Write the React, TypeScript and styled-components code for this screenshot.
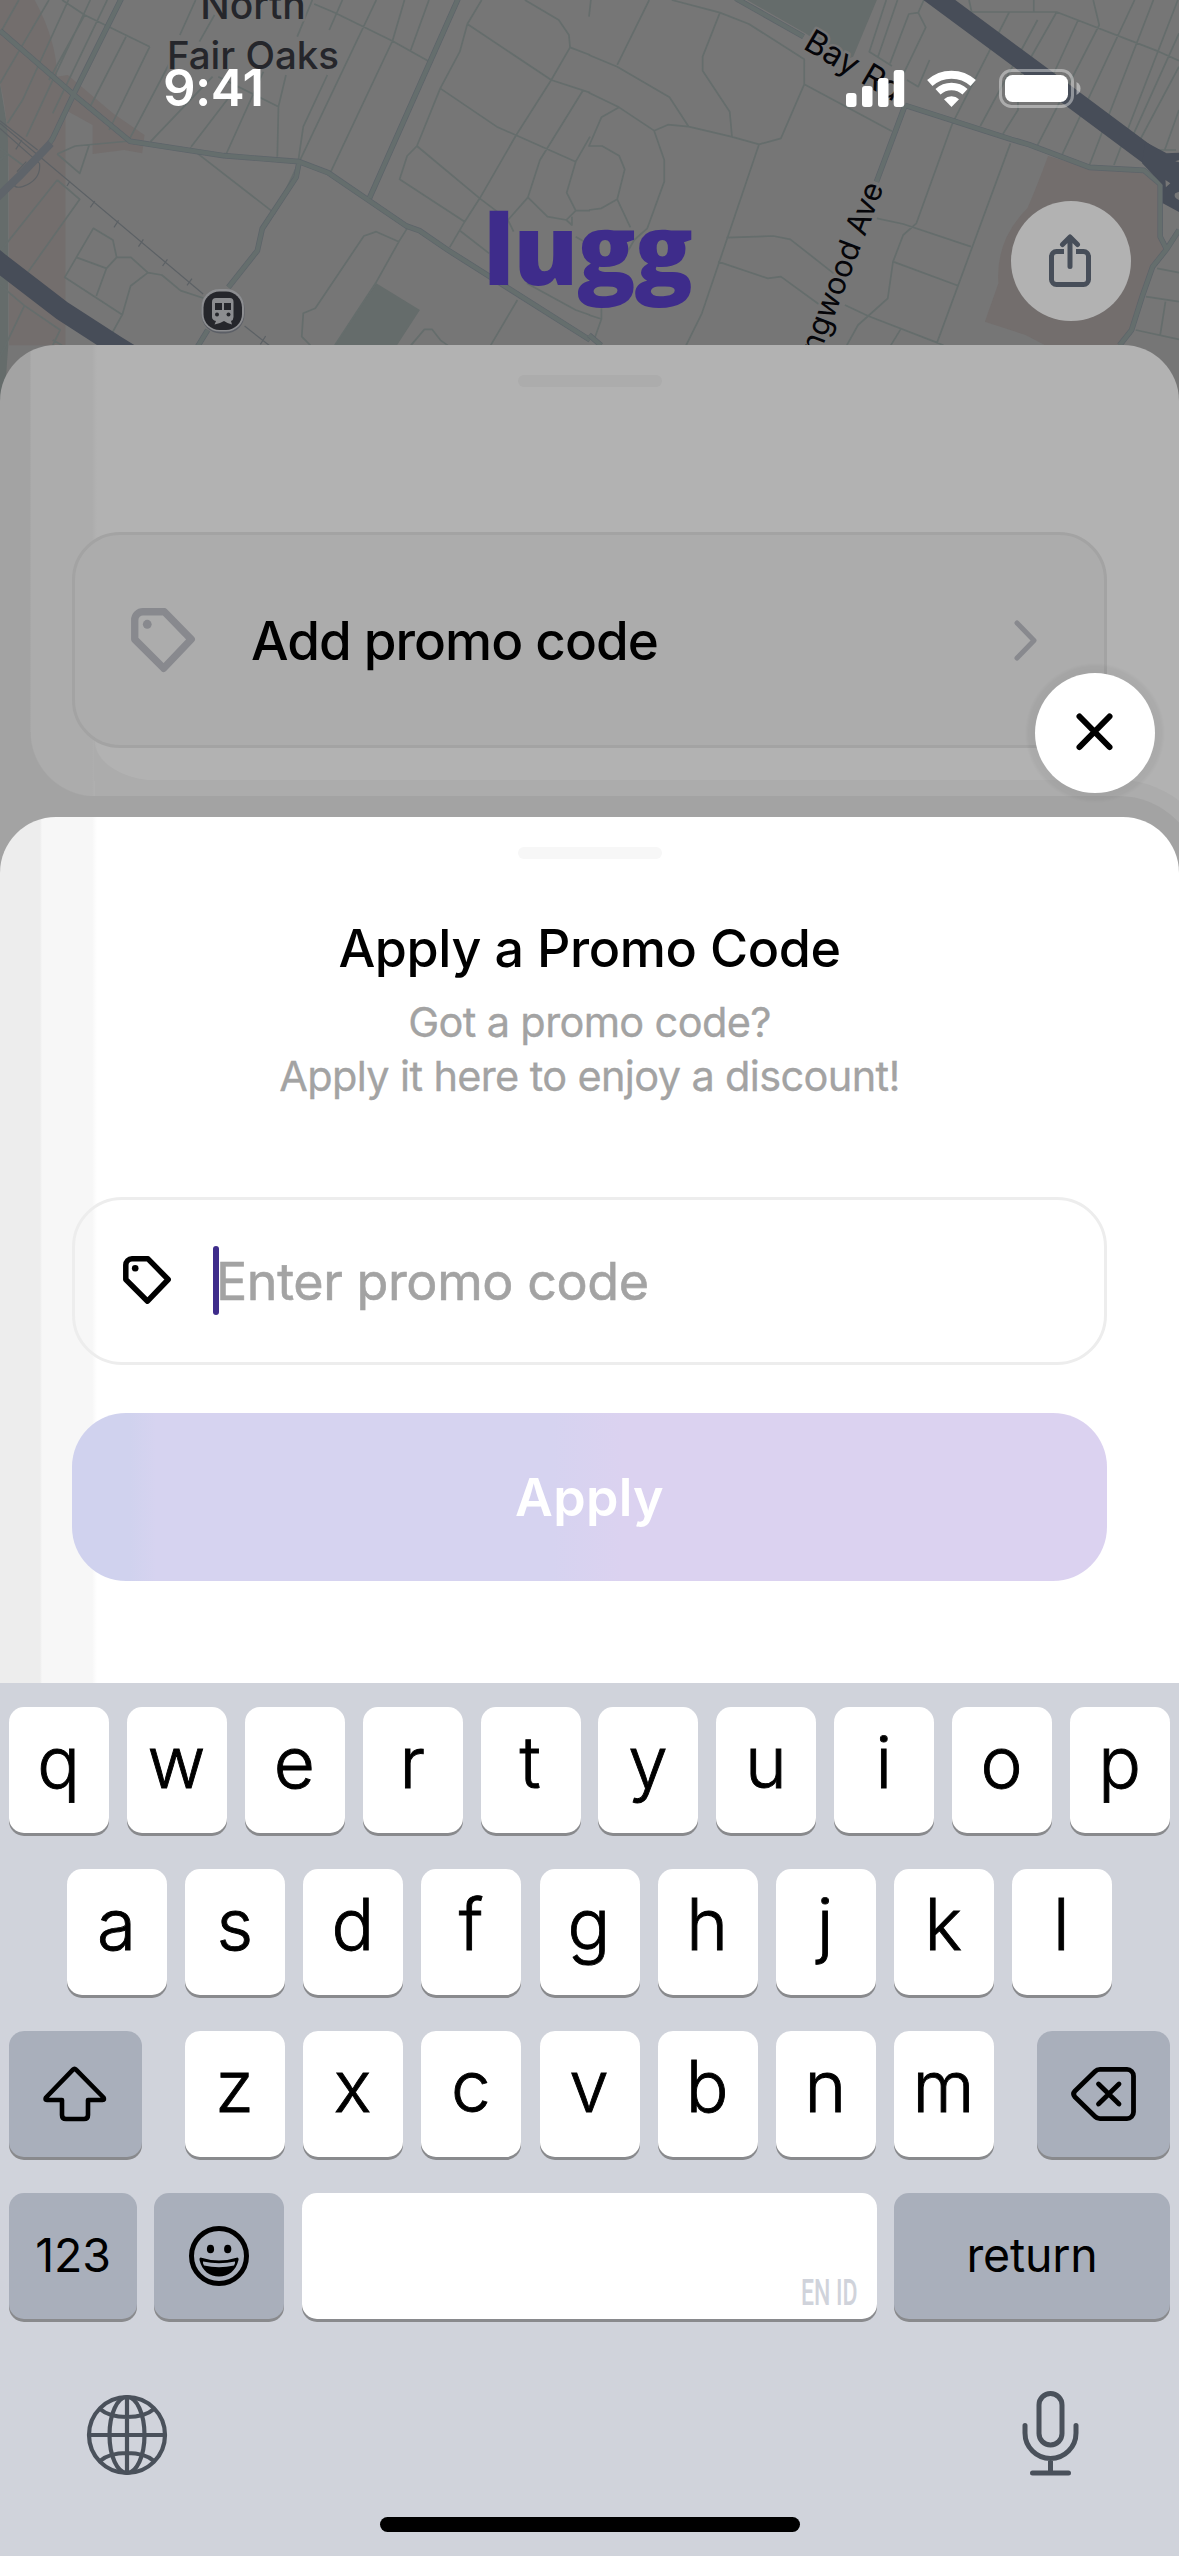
import React from "react";
import styled, { createGlobalStyle } from "styled-components";

const sans = `Inter, "Liberation Sans", sans-serif`;

const GlobalStyle = createGlobalStyle`
  * { box-sizing: border-box; }
  html, body { margin: 0; padding: 0; }
  body { width: 1179px; height: 2556px; overflow: hidden; background: #767676; font-family: ${sans}; }
`;

const Screen = styled.main`
  position: relative;
  display: flex;
  flex-direction: column;
  width: 1179px;
  height: 2556px;
  overflow: hidden;
  background: #767676;
`;

/* ---------- map ---------- */

const MapCanvas = styled.svg`
  position: absolute;
  top: 0;
  left: 0;
  z-index: 0;
  display: block;
`;

const Tile = styled.g`
  fill: none;
  stroke-linejoin: round;

  path { vector-effect: non-scaling-stroke; }
  .brown { fill: #736e6d; }
  .green { fill: #656c6b; }
  .street { stroke: #656d6c; stroke-width: 1.7px; }
  .edge { stroke: #5d646a; stroke-width: 5.6px; }
  .road { stroke: #656e6d; stroke-width: 4.2px; }
  .rail { stroke: #5c6165; stroke-width: 1.2px; }
  .highway { stroke: #474d58; }
`;

const MapLabel = styled.text<{ $size: number; $weight?: number; $color?: string }>`
  font-family: ${sans};
  font-size: ${(p) => p.$size}px;
  font-weight: ${(p) => p.$weight ?? 400};
  fill: ${(p) => p.$color ?? "#050509"};
  stroke: #767676;
  stroke-width: 5px;
  stroke-linejoin: round;
  paint-order: stroke;
`;

const westRoads =
  "M325-10L197 280L140 415L120 450 M0 92L195 283L346 424L595 467L795 485L872 518L1080 678L1115 692L1190 750L1568 1020 M1218-5L982 594 M795 485L787 532L697 686L684 752L607 862 M552 990L525 1040";
const eastRoads =
  "M390-5L570 110 M840 316L1122 418L1170 434L1330 502L1475 511L1518 552V710L1535 748 M840 316L764 545 M1568 690L1535 748L1498 800L1470 890L1442 990L1410 1036 M0 1005L32 1036";

const Map = () => (
  <MapCanvas width="1179" height="460" viewBox="0 0 1179 460">
    <rect width="1179" height="460" fill="#767676" />
    <Tile transform="scale(.37628 .33333)">
      <path className="green" d="M0 250L22 400V1036L0 1380Z M890 1036L1000 850L1116 930L1055 1036Z" />
      <path className="brown" d="M0 0H92Q150 120 152 230L180 225L300 340L384 405L378 460L330 450L246 462V375L174 330V1036H24V500Q20 330 0 250Z" />
      <path
        className="street"
        d="M50 0L5 90 M130 0L0 250 M182 0L60 300L20 370 M240 0L70 410 M285 0L140 340 M165 0L225 45L398 140 M225 45L130 240 M335 110L235 330 M398 140L290 390 M455 180L345 415 M520 0L478 105 M570 45L530 125 M830 0L790 110 M835 12L890 38L1043 123L1138 183 M910 0L875 90 M1000 0L730 640L505 443 M700 215L600 465 M760 225L740 320L737 470 M580 230L740 320 M630 260L508 440 M565 230L400 425 M870 225L806 380L793 480 M1075 0L1043 123L878 518 M1140 0L1090 155 M1280 0L1242 72L1222 155L1170 265L1108 438 M1242 72L1465 240L1568 278 M1395 0L1485 60L1512 105L1515 142L1465 240L1372 405L1275 595L1235 665L1195 742 M1515 142L1568 165 M1170 265L1320 380L1530 485L1568 410 M1550 270L1435 480L1403 592L1350 660L1365 695 M1108 438L1082 468L1062 538L1235 665 M1108 438L1275 595L1345 655 M1530 485L1506 578L1530 632H1568 M1403 592L1455 650L1505 660L1530 632 M1505 660L1520 675V650 M1530 710L1568 735 M1220 690L1300 760 M1400 850L1530 930L1568 945 M1375 900L1304 1036 M1082 685L1060 725L998 850L890 1036 M1060 725L1000 695L967 708L838 925L806 940L802 1010L825 1036 M1092 1036L1128 988H1148L1172 1022L1190 1036 M152 462L200 438L345 423 M152 462L212 520L237 435 M152 540L212 598L75 815 M152 540L0 755 M248 685L300 720L310 772L283 805L203 772ZM310 772H348L393 818L430 825L480 872L540 894 M203 772L172 832L325 944L295 1005L275 1036 M393 818L347 858L325 944 M283 805L256 888 M0 855L65 917L160 990L140 1036 M65 917L0 1070 M140 1020L165 1036 M0 445L60 495 M0 480L15 465"
      />
      <path className="rail" d="M0 370L540 882 M0 362L100 450 M650 978L715 1036 M42 448L58 420 M178 558L186 543 M240 622L252 603 M303 682L315 661 M368 740L381 718 M432 798L445 778 M497 856L510 836 M692 1033L706 1008 M0 385L105 490Q110 540 60 560Q40 565 38 555 M45 515L70 485" />
      <path className="edge" d={westRoads} />
      <path className="road" d={westRoads} />
      <path stroke="#5f646a" strokeWidth="8" d="M135 430L50 530L-10 595" />
      <path className="highway" strokeWidth="20" d="M-40 752L0 789L165 932L308 1036L400 1100" />
    </Tile>
    <Tile transform="translate(589 0) scale(.37628 .33333)">
      <path className="green" d="M420 0H765L702 170L680 180L575 100Z" />
      <path className="brown" d="M1220 468L1330 505L1475 511L1518 552V710L1535 748L1498 800L1442 990L1410 1046H1230L1160 1005L1052 965L1088 850Q1080 720 1165 625Q1190 560 1220 468Z" />
      <path
        className="street"
        d="M5 0L0 50 M160 0L75 195 M220 0L348 38L425 72L572 178V253L510 415L452 433L378 410L265 380L210 374L173 392 M348 38L302 170V212L374 335L380 410 M0 165L75 200L214 292L265 380 M0 278L80 322L173 392L200 480V545L155 685L120 720L100 760 M80 322L33 352L0 438H35L80 467L95 508L75 598L110 682 M75 598L33 625L0 630 M572 253L805 394 M452 433L300 940L258 1036 M790 0L745 155L805 198 M820 0L768 170 M875 38L895 82L830 235 M890 0L875 38L850 42L800 190 M1010 0L1017 36H1243L1515 155L1568 182 M1182 0V36 M1117 36L975 350L965 373L870 670L835 705L808 785L794 895L742 948 M1192 60L1040 378 M1243 36L1140 240V330L1100 402 M1300 60L1215 270 M1340 0L1356 75L1190 440 M1450 0L1255 470 M1500 0L1330 495 M1565 0L1395 495 M1568 100L1430 445 M1568 200L1450 450H1560 M1568 330L1530 450 M1120 430L925 1028 M365 713L490 708L535 718L650 820 M343 785L475 835L510 830L610 912 M765 655L835 672L1015 740 M808 785L983 858 M680 915L742 948L925 1028L942 1036 M742 948L715 975L685 1036 M828 988L802 1036 M845 240L875 260L905 180 M1510 805L1568 818 M1480 890L1568 905 M1453 990L1568 1018 M1532 905L1518 1005 M0 945L33 957L15 1015 M33 957V925"
      />
      <path className="edge" d={eastRoads} />
      <path className="road" d={eastRoads} />
      <path className="highway" strokeWidth="19" d="M900-26L1200 225L1545 515" />
      <path fill="#474d58" d="M1478 425L1535 460L1568 458V636L1525 610V555L1470 490Z" />
      <path fill="#767676" d="M1532 540L1545 550L1533 562Z M1558 580Q1552 592 1568 600V575Z M1558 484L1568 487V480Z" />
    </Tile>
    <MapLabel x="253" y="19" textAnchor="middle" $size={39} $weight={500} $color="#25262b">North</MapLabel>
    <MapLabel x="253" y="69" textAnchor="middle" $size={38.5} $weight={500} $color="#25262b">Fair Oaks</MapLabel>
    <MapLabel transform="translate(802 48) rotate(30.500)" $size={32.5}>Bay Rd</MapLabel>
    <MapLabel transform="translate(884 187) rotate(-69)" textAnchor="end" $size={30.8}>Ringwood Ave</MapLabel>
    <rect x="201.500" y="289.500" width="43" height="44" rx="19" fill="#5c5f66" />
    <rect x="201.500" y="289" width="42.500" height="42.500" rx="18" fill="#8c8d90" />
    <rect x="203.500" y="291.500" width="38.500" height="38.500" rx="16" fill="#25262b" />
    <path fill="#8c8d90" d="M216 298H230Q233.500 298 233.500 302V317Q233.500 320 231 321L232 324.500L227.500 323L224 321L220 323L214.500 324.500L216 321Q212 320 212 317V302Q212 298 216 298Z" />
    <path fill="#25262b" d="M215 303H222V310H215ZM224 303H231V310H224Z" />
    <circle cx="217" cy="314.500" r="2" fill="#25262b" />
    <circle cx="228.500" cy="314.500" r="2" fill="#25262b" />
  </MapCanvas>
);

/* ---------- header ---------- */

const Header = styled.header`
  position: relative;
  z-index: 1;
  display: flex;
  flex-direction: column;
  height: 345px;
`;

const StatusBar = styled.div`
  display: flex;
  justify-content: space-between;
  align-items: center;
  height: 176px;
  padding: 0 98px 0 163px;
`;

const Clock = styled.time`
  color: #fff;
  font-size: 51px;
  font-weight: 600;
  letter-spacing: -0.6px;
  line-height: 60px;
`;

const StatusIcons = styled.div`
  display: flex;
  align-items: center;
  gap: 23px;
`;

const Svg = styled.svg`
  display: block;
  flex: none;
  overflow: visible;
`;

const BrandRow = styled.div`
  display: grid;
  grid-template-columns: 1fr auto 1fr;
  align-items: center;
  height: 120px;
  margin-top: 25px;
  padding: 0 48px;
`;

const Logo = styled.div`
  grid-column: 2;
  padding: 0 4px 28px 0;
  color: #3e2c8b;
  font-family: "Open Sans", sans-serif;
  font-size: 97px;
  font-weight: 800;
  line-height: 92px;
  letter-spacing: -1.4px;
`;

const RoundButton = styled.button<{ $bg: string }>`
  display: flex;
  align-items: center;
  justify-content: center;
  width: 120px;
  height: 120px;
  padding: 0;
  border: 0;
  border-radius: 50%;
  background: ${(p) => p.$bg};
`;

const ShareButton = styled(RoundButton)`
  justify-self: end;
  padding-right: 2px;
`;

/* ---------- sheets ---------- */

const BookingSheet = styled.section`
  position: relative;
  z-index: 1;
  display: flex;
  flex-direction: column;
  align-items: center;
  flex: none;
  height: 560px;
  padding: 30px 72px 0;
  overflow: hidden;
  border-radius: 56px 56px 0 0;
  background: linear-gradient(90deg, #a3a3a3 30px, #acacac 31px, #acacac 92px, #b2b2b2 97px);

  &::before,
  &::after {
    content: "";
    position: absolute;
  }
  &::before {
    left: 30px;
    top: 387px;
    width: 66px;
    height: 65px;
    background: radial-gradient(66px 65px at 100% 0, transparent 98%, #a3a3a3 100%);
  }
  &::after {
    left: 94px;
    top: 395px;
    width: 65px;
    height: 41px;
    background: radial-gradient(65px 41px at 100% 0, transparent 98%, #acacac 100%);
  }
`;

const SheetShade = styled.div<{ $spread: number; $left: number; $color: string }>`
  position: absolute;
  top: ${(p) => 472 - p.$spread}px;
  right: ${(p) => -p.$spread}px;
  bottom: 0;
  left: ${(p) => p.$left}px;
  border-top-right-radius: ${(p) => 60 + p.$spread}px;
  background: ${(p) => p.$color};
`;

const Grabber = styled.div<{ $color: string }>`
  flex: none;
  width: 144px;
  height: 12px;
  border-radius: 6px;
  background: ${(p) => p.$color};
`;

const PromoRow = styled.div`
  position: relative;
  z-index: 1;
  display: flex;
  align-items: center;
  width: 1035px;
  height: 216px;
  margin-top: 145px;
  padding: 0 67px 0 56px;
  border: 3px solid #a3a3a3;
  border-radius: 48px;
  background: #acacac;
`;

const PromoRowLabel = styled.span`
  flex: 1;
  padding: 1px 0 0 56px;
  color: #000;
  font-size: 53px;
  font-weight: 500;
  line-height: 68px;
  letter-spacing: -1px;
`;

const PromoSheet = styled.section`
  position: relative;
  z-index: 2;
  display: flex;
  flex-direction: column;
  align-items: center;
  flex: none;
  height: 866px;
  margin-top: -88px;
  padding: 30px 72px 0;
  border-radius: 56px 56px 0 0;
  background: linear-gradient(90deg, #ededed 40px, #f7f7f7 42px, #f7f7f7 92px, #fff 97px);
`;

const CloseButton = styled(RoundButton)`
  position: absolute;
  top: -144px;
  right: 24px;
  padding: 0 1px 2px 0;
  box-shadow: 0 0 3px 8px rgba(0, 0, 0, 0.045);
`;

const Title = styled.h1`
  margin: 56px 0 0;
  color: #000;
  font-size: 52px;
  font-weight: 500;
  line-height: 68px;
  letter-spacing: -0.4px;
`;

const Subtitle = styled.p`
  margin: 12px 0 0;
  color: #a3a3a3;
  font-size: 41.500px;
  font-weight: 400;
  -webkit-text-stroke: 0.3px #a3a3a3;
  line-height: 54px;
  letter-spacing: -0.65px;
  text-align: center;
`;

const CodeField = styled.div`
  display: flex;
  align-items: center;
  width: 1035px;
  height: 168px;
  margin-top: 94px;
  padding-left: 48px;
  border: 3px solid #ededed;
  border-radius: 50px;

  > svg { margin-bottom: 2px; }
`;

const Caret = styled.i`
  width: 6px;
  height: 69px;
  margin: -2px -3px 0 42px;
  border-radius: 3px;
  background: #3e2c8b;
`;

const Placeholder = styled.span`
  padding-top: 2px;
  color: #a3a3a3;
  font-size: 52px;
  font-weight: 400;
  -webkit-text-stroke: 0.6px #a3a3a3;
  line-height: 68px;
  letter-spacing: -0.4px;
`;

const ApplyButton = styled.button`
  width: 1035px;
  height: 168px;
  margin-top: 48px;
  padding: 1px 0 0;
  border: 0;
  border-radius: 54px;
  background: linear-gradient(90deg, #d0d2ee 58px, #d6d3f0 84px, #d6d3f0 480px, #dbd2f0 550px);
  color: #fff;
  font-family: ${sans};
  font-size: 52px;
  font-weight: 600;
  letter-spacing: 0.3px;
`;

/* ---------- keyboard ---------- */

const Keyboard = styled.section`
  position: relative;
  z-index: 3;
  display: flex;
  flex: 1;
  flex-direction: column;
  gap: 36px;
  padding: 24px 9px 0;
  background: #d0d3db;
`;

const KeyRow = styled.div<{ $between?: boolean; $gap?: number }>`
  display: flex;
  justify-content: ${(p) => (p.$between ? "space-between" : "center")};
  gap: ${(p) => p.$gap ?? 18}px;
  height: 126px;
`;

const KeyGroup = styled.div`
  display: flex;
  gap: 18.2px;
`;

const Key = styled.button<{ $width?: number; $dark?: boolean }>`
  display: flex;
  align-items: center;
  justify-content: center;
  flex: none;
  width: ${(p) => p.$width ?? 100}px;
  height: 126px;
  padding: 0;
  border: 0;
  border-radius: 15px;
  background: ${(p) => (p.$dark ? "#a9afbb" : "#fff")};
  box-shadow: 0 3px 0 #898a8d;
  color: #000;
  font-family: ${sans};
`;

const LetterKey = styled(Key)`
  align-items: flex-start;
  padding: 0 1px 0 0;
  font-size: 71px;
  font-weight: 300;
  -webkit-text-stroke: 0.9px #000;
  line-height: 110px;
`;

const TextKey = styled(Key)`
  padding-bottom: 2px;
  font-size: 46.500px;
  font-weight: 400;
  letter-spacing: -0.2px;
`;

const SpaceKey = styled(Key)`
  align-items: flex-end;
  justify-content: flex-end;
  padding: 0 21px 8px 0;
`;

const Language = styled.span`
  width: 55px;
  color: #d0d3db;
  font-family: Roboto, sans-serif;
  font-size: 36px;
  font-weight: 500;
  line-height: 36px;
  white-space: nowrap;
  transform: scaleX(0.64);
  transform-origin: left;
`;

const BottomBar = styled.div`
  display: flex;
  justify-content: space-between;
  align-items: center;
  height: 90px;
  margin-top: 33px;
  padding: 0 91px 0 78px;
`;

const HomeIndicator = styled.div`
  align-self: center;
  width: 420px;
  height: 15px;
  margin-top: 3px;
  border-radius: 8px;
  background: #000;
`;

/* ---------- icons ---------- */

const TagIcon = ({ size, color }: { size: number; color: string }) => (
  <Svg width={size} height={size} viewBox="0 0 48 48" fill="none" stroke={color} strokeWidth="5.500" strokeLinejoin="round">
    <path d="M9 2.800H25L45.200 23.500L24.500 45.200L2.800 23.500V9A6.200 6.200 0 0 1 9 2.800Z" />
    <circle cx="12.200" cy="12.200" r="3.300" fill={color} stroke="none" />
  </Svg>
);

const SignalIcon = () => (
  <Svg width="58" height="37" viewBox="0 0 58 37" fill="#fff">
    <rect y="23" width="10.500" height="14" rx="3" />
    <rect x="16" y="16" width="10.500" height="21" rx="3" />
    <rect x="32" y="8" width="10.500" height="29" rx="3" />
    <rect x="47.700" width="10.500" height="37" rx="3" />
  </Svg>
);

const WifiIcon = () => (
  <Svg width="49" height="37" viewBox="0 0 49 37" fill="none" stroke="#fff" strokeWidth="8">
    <path d="M2.800 13A32.500 32.500 0 0 1 46.200 13" />
    <path strokeWidth="7.500" d="M11 21.700A20 20 0 0 1 38 21.700" />
    <path stroke="none" fill="#fff" d="M24.500 37L17 29.300A11 11 0 0 1 32 29.300Z" />
  </Svg>
);

const BatteryIcon = () => (
  <Svg width="82" height="39" viewBox="0 0 82 39">
    <rect x="1.500" y="1.500" width="72" height="36" rx="11" fill="none" stroke="#fff" strokeOpacity=".4" strokeWidth="3" />
    <rect x="6" y="6" width="63" height="27" rx="7.500" fill="#fff" />
    <path d="M77.500 13Q81.500 15 81.500 19.500T77.500 26Z" fill="#fff" fillOpacity=".45" />
  </Svg>
);

const ShareIcon = () => (
  <Svg width="42" height="54" viewBox="0 0 42 54" fill="none" stroke="#474e59" strokeWidth="5" strokeLinecap="round" strokeLinejoin="round">
    <path strokeLinecap="butt" d="M15 17.500H7.500A5 5 0 0 0 2.500 22.500V45.500A5 5 0 0 0 7.500 50.500H34.500A5 5 0 0 0 39.500 45.500V22.500A5 5 0 0 0 34.500 17.500H27" />
    <path d="M21 32.500V3.500M13.500 10.500L21 3L28.500 10.500" />
  </Svg>
);

const ChevronIcon = () => (
  <Svg width="23" height="41" viewBox="0 0 23 41" fill="none" stroke="#88898e" strokeWidth="5" strokeLinecap="round" strokeLinejoin="round">
    <path d="M3 3L20 20.500L3 38" />
  </Svg>
);

const CloseIcon = () => (
  <Svg width="36" height="36" viewBox="0 0 36 36" fill="none" stroke="#000" strokeWidth="6" strokeLinecap="round">
    <path d="M2.500 2.500L32.500 33M32.500 2.500L2.500 33" />
  </Svg>
);

const ShiftIcon = () => (
  <Svg width="64" height="56" viewBox="1 0 64 56" fill="none" stroke="#000" strokeWidth="4.600" strokeLinejoin="round">
    <path d="M30 3.600Q31.500 2 33 3.600L60.500 31.500Q62 34 59.500 34H45V49Q45 53 41 53H23Q19 53 19 49V34H4Q1.500 34 3 31.500Z" />
  </Svg>
);

const BackspaceIcon = () => (
  <Svg width="65" height="54" viewBox="0 0 65 54" fill="none" stroke="#000" strokeWidth="4.800" strokeLinecap="round" strokeLinejoin="round">
    <path d="M29 2.400H56A6.500 6.500 0 0 1 62.500 9V45A6.500 6.500 0 0 1 56 51.600H29Q26 51.600 24 49.500L4 30Q1.200 27 4 24L24 4.500Q26 2.400 29 2.400Z" />
    <path d="M27.500 17L48 37M48 17L27.500 37" />
  </Svg>
);

const EmojiIcon = () => (
  <Svg width="60" height="60" viewBox="0 0 60 60" fill="#000">
    <circle cx="30" cy="30" r="27.500" fill="none" stroke="#000" strokeWidth="5" />
    <ellipse cx="21.500" cy="23" rx="3.600" ry="4.300" />
    <ellipse cx="38.700" cy="23" rx="3.600" ry="4.300" />
    <path d="M11.500 31.500Q30 37.500 48.500 31.500Q50 32 49.500 34C47 45 39 50.500 30 50.500S13 45 10.500 34Q10 32 11.500 31.500Z" />
    <path fill="#a9afbb" d="M14 35.500Q30 39 46 35.500Q46.500 37 45 39.500Q30 43 15 39.500Q13.500 37 14 35.500Z" />
  </Svg>
);

const GlobeIcon = () => (
  <Svg width="80" height="76" viewBox="0 0 80 76" fill="none" stroke="#4a515b" strokeWidth="4.200">
    <circle cx="40" cy="40" r="38" />
    <ellipse cx="40" cy="40" rx="17.500" ry="38" />
    <path d="M40 2V78M2 40H78M13 14Q22 22 40 22T67 14M13 66Q22 58 40 58T67 66" />
  </Svg>
);

const MicIcon = () => (
  <Svg width="57" height="85" viewBox="0 0 57 85" fill="none" stroke="#4a515b" strokeWidth="5" strokeLinecap="round">
    <rect x="17" y="2.500" width="23" height="51.500" rx="11.500" />
    <path d="M3 34.500V42A25.500 25.500 0 0 0 54 42V34.500M28.500 67.500V82M10.500 82H46.500" />
  </Svg>
);

const letters = (row: string) => row.split("").map((c) => <LetterKey key={c}>{c}</LetterKey>);

export default function App() {
  return (
    <Screen>
      <GlobalStyle />
      <Map />
      <Header>
        <StatusBar>
          <Clock>9:41</Clock>
          <StatusIcons>
            <SignalIcon />
            <WifiIcon />
            <BatteryIcon />
          </StatusIcons>
        </StatusBar>
        <BrandRow>
          <Logo>lugg</Logo>
          <ShareButton $bg="#b2b2b2" aria-label="Share">
            <ShareIcon />
          </ShareButton>
        </BrandRow>
      </Header>

      <BookingSheet>
        <SheetShade $spread={37} $left={95} $color="#acacac" />
        <SheetShade $spread={21} $left={0} $color="#a3a3a3" />
        <Grabber $color="#acacac" />
        <PromoRow>
          <TagIcon size={64} color="#88898e" />
          <PromoRowLabel>Add promo code</PromoRowLabel>
          <ChevronIcon />
        </PromoRow>
      </BookingSheet>

      <PromoSheet>
        <CloseButton $bg="#fff" aria-label="Close">
          <CloseIcon />
        </CloseButton>
        <Grabber $color="#f7f7f7" />
        <Title>Apply a Promo Code</Title>
        <Subtitle>
          Got a promo code?
          <br />
          Apply it here to enjoy a discount!
        </Subtitle>
        <CodeField>
          <TagIcon size={48} color="#000" />
          <Caret />
          <Placeholder>Enter promo code</Placeholder>
        </CodeField>
        <ApplyButton>Apply</ApplyButton>
      </PromoSheet>

      <Keyboard>
        <KeyRow $gap={17.9}>{letters("qwertyuiop")}</KeyRow>
        <KeyRow $gap={18.1}>{letters("asdfghjkl")}</KeyRow>
        <KeyRow $between>
          <Key $dark $width={133} aria-label="Shift">
            <ShiftIcon />
          </Key>
          <KeyGroup>{letters("zxcvbnm")}</KeyGroup>
          <Key $dark $width={133} aria-label="Delete">
            <BackspaceIcon />
          </Key>
        </KeyRow>
        <KeyRow $between $gap={16}>
          <TextKey $dark $width={128}>123</TextKey>
          <Key $dark $width={130} aria-label="Emoji">
            <EmojiIcon />
          </Key>
          <SpaceKey $width={575}>
            <Language>EN ID</Language>
          </SpaceKey>
          <TextKey $dark $width={276}>return</TextKey>
        </KeyRow>
        <BottomBar>
          <GlobeIcon />
          <MicIcon />
        </BottomBar>
        <HomeIndicator />
      </Keyboard>
    </Screen>
  );
}
